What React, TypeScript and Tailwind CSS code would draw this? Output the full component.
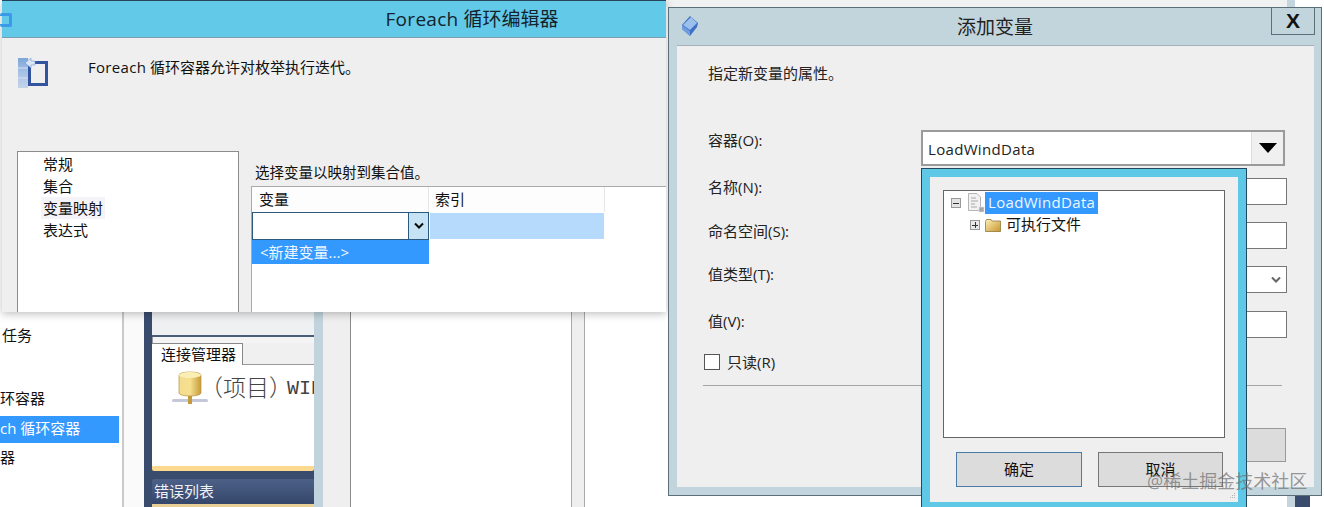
const font = "font-['Open_Sans','Noto_Sans_CJK_SC',sans-serif]";

function ForeachIcon() {
  return (
    <svg width="30" height="31" viewBox="0 0 30 31">
      <defs>
        <linearGradient id="fg" x1="0" y1="0" x2="0" y2="1">
          <stop offset="0" stopColor="#7fa6d8" />
          <stop offset="0.5" stopColor="#a9c3e6" />
          <stop offset="1" stopColor="#c3d3ea" />
        </linearGradient>
      </defs>
      <rect x="11.5" y="4.5" width="17" height="22" fill="none" stroke="#33559f" strokeWidth="3" />
      <rect x="0" y="0" width="10" height="30" fill="url(#fg)" />
      <path d="M0 10H10M0 20H10" stroke="#d5e2f2" strokeWidth="1" />
      <path d="M7 5L13 0V3H17V7H13V10Z" fill="#d8e6f7" stroke="#6f97d0" strokeWidth="0.6" />
    </svg>
  );
}

function GemIcon() {
  return (
    <svg width="18" height="21" viewBox="0 0 18 21">
      <path d="M9 0L17 7L16 11L9 20L1 13L1 9Z" fill="#3f6fc4" />
      <path d="M10 1L16 7L9 14L2 9Z" fill="#9cc0ec" />
      <path d="M1 9L9 15L9 20L1 13Z" fill="#6f9be0" />
    </svg>
  );
}

function DbIcon() {
  return (
    <svg className="shrink-0" width="36" height="34" viewBox="0 0 36 34">
      <defs>
        <linearGradient id="db" x1="0" y1="0" x2="1" y2="0">
          <stop offset="0" stopColor="#f3dc8e" />
          <stop offset="0.5" stopColor="#f6e08f" />
          <stop offset="1" stopColor="#c79b3c" />
        </linearGradient>
      </defs>
      <rect x="0" y="28" width="36" height="3" rx="1.5" fill="#c4c8d8" />
      <rect x="16" y="22" width="4" height="11" fill="#c49a3c" />
      <path d="M7 4C7 0 29 0 29 4V22C29 26 7 26 7 22Z" fill="url(#db)" stroke="#b8923f" strokeWidth="0.7" />
      <ellipse cx="18" cy="4" rx="11" ry="3" fill="#fbeeb4" />
    </svg>
  );
}

function FileIcon() {
  return (
    <svg width="18" height="20" viewBox="0 0 18 20">
      <path d="M1.5 0.5H10L13.5 4V17.5H1.5Z" fill="#f2f2f2" stroke="#b5b5b5" />
      <path d="M4 5H9M4 8H11M4 11H8M4 14H10" stroke="#a8a8a8" strokeWidth="1" />
      <rect x="12" y="14" width="5" height="5" fill="#a6a6a6" stroke="#e4e4e4" strokeWidth="0.6" />
    </svg>
  );
}

function FolderIcon() {
  return (
    <svg width="16" height="13" viewBox="0 0 16 13">
      <defs>
        <linearGradient id="fd" x1="0" y1="0" x2="1" y2="1">
          <stop offset="0" stopColor="#fdf0b8" />
          <stop offset="1" stopColor="#c9952c" />
        </linearGradient>
      </defs>
      <path d="M0.5 2.5L1.5 0.5H6L7 2H15.5V12.5H0.5Z" fill="url(#fd)" stroke="#8d7a3f" strokeWidth="0.8" />
    </svg>
  );
}

function Background() {
  return (
    <div className="flex h-full w-full bg-white text-[15px] leading-[20px] text-[#111]">
      <div className="w-[124px] shrink-0 overflow-hidden border-r-2 border-[#c9c9c9] bg-white pt-[325px]">
        <div className="pl-[2px]">任务</div>
        <div className="mt-[43px]">环容器</div>
        <div className="mt-[8px] flex h-[27px] w-[119px] items-center whitespace-nowrap bg-[#3399ff] pb-[3px] text-white">ch 循环容器</div>
        <div className="mt-[4px]">器</div>
      </div>
      <div className="w-[20px] shrink-0 bg-[#fafafa]" />
      <div className="w-[8px] shrink-0 bg-[#3a4c6e]" />
      <div className="flex w-[162px] shrink-0 flex-col overflow-hidden bg-[#3a4c6e]">
        <div className="h-[337px] shrink-0 border-b-2 border-[#4a5c78] bg-[#eef0f1]" />
        <div className="h-[6px] shrink-0 border-l border-[#999] bg-[#f4f4f4]" />
        <div className="flex h-[22px] shrink-0 border-b border-[#999] bg-[#f0f0f0]">
          <div className="-mb-px w-[91px] whitespace-nowrap border-r border-t border-[#888] bg-white pl-[9px]">连接管理器</div>
        </div>
        <div className="flex h-[101px] shrink-0 items-start overflow-hidden bg-white pl-[20px] pt-[6px]">
          <DbIcon />
          <div className="-ml-[8px] mt-[3px] flex whitespace-nowrap font-['Liberation_Serif','Noto_Sans_CJK_SC',serif] text-[23px] font-light leading-[30px] text-[#444]">
            <span>（项目）</span>
            <span className="-ml-[5px] font-['Liberation_Mono',monospace] text-[20px]">WIN</span>
          </div>
        </div>
        <div className="h-[5px] shrink-0 rounded-b-[2px] bg-[#fcd98f]" />
        <div className="h-[8px] shrink-0" />
        <div className="flex h-[25px] shrink-0 items-center rounded-t-[2px] bg-gradient-to-b from-[#4d6188] to-[#35466a] pb-[2px] pl-[2px] text-[#eef2f8]">错误列表</div>
        <div className="flex-1 bg-[#e8cf96]" />
      </div>
      <div className="w-[9px] shrink-0 bg-[#c1d4dd]" />
      <div className="w-[28px] shrink-0 border-r border-[#8a8a8a] bg-[#efefef]" />
      <div className="w-[220px] shrink-0 bg-white" />
      <div className="w-[14px] shrink-0 border-x border-[#a9a9a9] bg-[#efefef]" />
      <div className="flex w-[702px] shrink-0 flex-col">
        <div className="h-[7px] bg-[#f0f1f1]" />
      </div>
      <div className="w-[8px] shrink-0 bg-[#c5d5dd]" />
      <div className="flex w-[15px] shrink-0 flex-col bg-[#3a4c6e]">
        <div className="h-[7px] bg-white" />
      </div>
      <div className="flex-1 bg-white" />
    </div>
  );
}

function ForeachWindow() {
  return (
    <div className="absolute left-[2px] top-0 flex h-[312px] w-[664px] flex-col bg-[#efeff0] text-[15px] leading-[20px] text-[#111] shadow-[0_2px_8px_rgba(0,0,0,0.25)]">
      <div className="flex h-[38px] shrink-0 items-center justify-center border-b border-t border-b-[#7d9db3] border-t-[#26445a] bg-[#63c9e8] pl-[276px] text-[19px] text-[#14232c]">
        <span className="tracking-[0.3px]">Foreach</span>&nbsp;循环编辑器
      </div>
      <div className="flex h-[113px] shrink-0 pl-[16px] pt-[20px]">
        <ForeachIcon />
        <div className="-mt-[1px] ml-[40px] whitespace-nowrap"><span className="tracking-[0.3px]">Foreach</span> 循环容器允许对枚举执行迭代。</div>
      </div>
      <div className="flex min-h-0 flex-1 pl-[15px]">
        <div className="w-[222px] shrink-0 border border-b-0 border-[#8c8c8c] bg-white pl-[23px] pt-[1px]">
          <div className="flex h-[22px] items-center pl-[2px]">常规</div>
          <div className="flex h-[22px] items-center pl-[2px]">集合</div>
          <div className="flex h-[22px] w-[64px] items-center bg-[#f4f3f7] pl-[2px]">变量映射</div>
          <div className="flex h-[22px] items-center pl-[2px]">表达式</div>
        </div>
        <div className="flex min-w-0 flex-1 flex-col pl-[12px]">
          <div className="h-[35px] shrink-0 whitespace-nowrap pl-[4px] pt-[12px] text-[14.5px]">选择变量以映射到集合值。</div>
          <div className="min-h-0 flex-1 border-l border-t border-[#aaaaaa] bg-white">
            <div className="flex h-[25px]">
              <div className="flex w-[177px] items-center border-r border-[#e6e6e6] bg-[#fdfdfd] pb-[2px] pl-[7px]">变量</div>
              <div className="ml-[1px] flex w-[175px] items-center border-r border-[#e6e6e6] bg-[#fdfdfd] pb-[2px] pl-[5px]">索引</div>
            </div>
            <div className="flex h-[28px]">
              <div className="flex w-[177px] justify-end border border-[#2b5a7e] bg-white">
                <div className="flex w-[20px] items-center justify-center border-l border-[#2b5a7e] bg-[#c6e3f6]">
                  <svg width="10" height="8" viewBox="0 0 10 8"><path d="M1 1.5L5 5.5L9 1.5" fill="none" stroke="#0a0a0a" strokeWidth="2" /></svg>
                </div>
              </div>
              <div className="ml-[1px] mt-[1px] h-[26px] w-[174px] bg-[#b5dafb]" />
            </div>
            <div className="flex h-[24px] w-[177px] items-center bg-[#3399ff] pl-[8px] text-[#eef6ff]">&lt;新建变量...&gt;</div>
          </div>
        </div>
      </div>
    </div>
  );
}

function Field({ label, top, children, pt }: { label: string; top: string; pt: string; children: React.ReactNode }) {
  return (
    <div className={`flex items-start ${top}`}>
      <div className={`w-[213px] shrink-0 whitespace-nowrap ${pt}`}>{label}</div>
      {children}
    </div>
  );
}

function VariableWindow() {
  return (
    <div className="absolute left-[668px] top-[7px] flex h-[489px] w-[654px] flex-col border border-[#5b6f7b] bg-[#c2d5dd] text-[15px] leading-[20px] text-[#222]">
      <div className="relative flex h-[37px] shrink-0 items-center justify-center text-[19px] text-[#222]">
        添加变量
        <div className="absolute left-[12px] top-[8px]"><GemIcon /></div>
        <div className="absolute right-[6px] top-0 flex h-[27px] w-[44px] items-center justify-center border border-t-0 border-[#5b6f7b] font-['Liberation_Sans',sans-serif] text-[21px] font-bold text-[#111]">X</div>
      </div>
      <div className="mb-[8px] ml-[8px] mr-[7px] flex-1 border-t border-[#a4b2ba] bg-[#efeff0] pl-[31px] pt-[18px]">
        <div className="-mt-[1px] mb-[1px] whitespace-nowrap">指定新变量的属性。</div>
        <Field label="容器(O):" top="mt-[47px]" pt="mt-0">
          <div className="flex h-[36px] w-[364px] items-center justify-between border-2 border-[#9a9a9a] bg-white pl-[5px] text-[15px]">
            <span className="pt-[1px] tracking-[0.33px]">LoadWindData</span>
            <div className="flex h-full w-[32px] items-center justify-center border-l border-[#dddddd] bg-[#f0f0f0]">
              <svg width="18" height="10" viewBox="0 0 18 10"><path d="M0 0H18L9 10Z" fill="#000" /></svg>
            </div>
          </div>
        </Field>
        <Field label="名称(N):" top="mt-[12px]" pt="-mt-[1px]">
          <div className="h-[27px] w-[366px] border border-[#777] bg-white" />
        </Field>
        <Field label="命名空间(S):" top="mt-[17px]" pt="-mt-[1px]">
          <div className="h-[27px] w-[366px] border border-[#777] bg-white" />
        </Field>
        <Field label="值类型(T):" top="mt-[17px]" pt="-mt-[2px]">
          <div className="flex h-[27px] w-[366px] items-center justify-end border border-[#777] bg-white pr-[5px]">
            <svg width="10" height="8" viewBox="0 0 10 8"><path d="M1 1.5L5 5.5L9 1.5" fill="none" stroke="#666" strokeWidth="2" /></svg>
          </div>
        </Field>
        <Field label="值(V):" top="mt-[18px]" pt="mt-0">
          <div className="h-[27px] w-[366px] border border-[#777] bg-white" />
        </Field>
        <div className="-ml-[4px] mt-[14px] flex items-center">
          <div className="h-[16px] w-[16px] border border-[#555] bg-white" />
          <div className="ml-[7px]">只读(R)</div>
        </div>
        <div className="-ml-[5px] mt-[13px] h-px w-[579px] bg-[#a5a5a5]" />
        <div className="ml-[478px] mt-[42px] h-[34px] w-[100px] border border-[#999] bg-[#dcdcdc]" />
      </div>
    </div>
  );
}

function Popup() {
  return (
    <div className="absolute left-[921px] top-[168px] h-[339px] w-[326px] border border-b-0 border-[#23485e] bg-[#5ec8e6] px-[8px] pt-[8px] text-[15px] leading-[20px] text-[#111]">
      <div className="relative h-[325px] bg-[#efeff0] px-[13px] pt-[13px]">
        <div className="h-[248px] border border-[#666] bg-white pt-[1px]">
          <div className="flex h-[22px] items-center pl-[7px]">
            <div className="flex h-[10px] w-[10px] items-center justify-center border border-[#999] bg-[#e4e4e4]">
              <div className="h-px w-[6px] bg-[#333]" />
            </div>
            <div className="ml-[6px]"><FileIcon /></div>
            <div className="flex h-[22px] items-center bg-[#3399ff] px-[3px] pb-[2px] text-[#eef6ff]"><span className="tracking-[0.33px]">LoadWindData</span></div>
          </div>
          <div className="flex h-[22px] items-center pl-[26px]">
            <div className="relative flex h-[10px] w-[10px] items-center justify-center border border-[#999] bg-[#e8e8e8]">
              <div className="h-px w-[6px] bg-[#333]" />
              <div className="absolute left-[3.5px] top-[1px] h-[6px] w-px bg-[#333]" />
            </div>
            <div className="ml-[5px]"><FolderIcon /></div>
            <div className="ml-[5px] pb-[2px]">可执行文件</div>
          </div>
        </div>
        <div className="mt-[14px] flex pl-[13px]">
          <div className="flex h-[35px] w-[126px] items-center justify-center border border-[#4a7ba6] bg-[#dcdcdc] pb-[2px]">确定</div>
          <div className="ml-[16px] flex h-[35px] w-[125px] items-center justify-center border border-[#777] bg-[#dcdcdc] pb-[2px]">取消</div>
        </div>
        <svg className="absolute bottom-[2px] right-[2px]" width="8" height="8" viewBox="0 0 8 8">
          <path d="M6 1h1v1H6zM4 3h1v1H4zM6 3h1v1H6zM2 5h1v1H2zM4 5h1v1H4zM6 5h1v1H6z" fill="#b0b0b0" />
        </svg>
      </div>
    </div>
  );
}

export default function App() {
  return (
    <div className={`relative h-[507px] w-[1324px] overflow-hidden ${font}`}>
      <Background />
      <ForeachWindow />
      <div className="absolute left-0 top-[13px] h-[14px] w-[12px] rounded-[2px] border-[3px] border-l-0 border-[#3b9ae8]" />
      <VariableWindow />
      <Popup />
      <div className="absolute left-[1147px] top-[469px] whitespace-nowrap text-[18px] leading-[24px] text-[#6e6e6e]/70">@稀土掘金技术社区</div>
    </div>
  );
}
